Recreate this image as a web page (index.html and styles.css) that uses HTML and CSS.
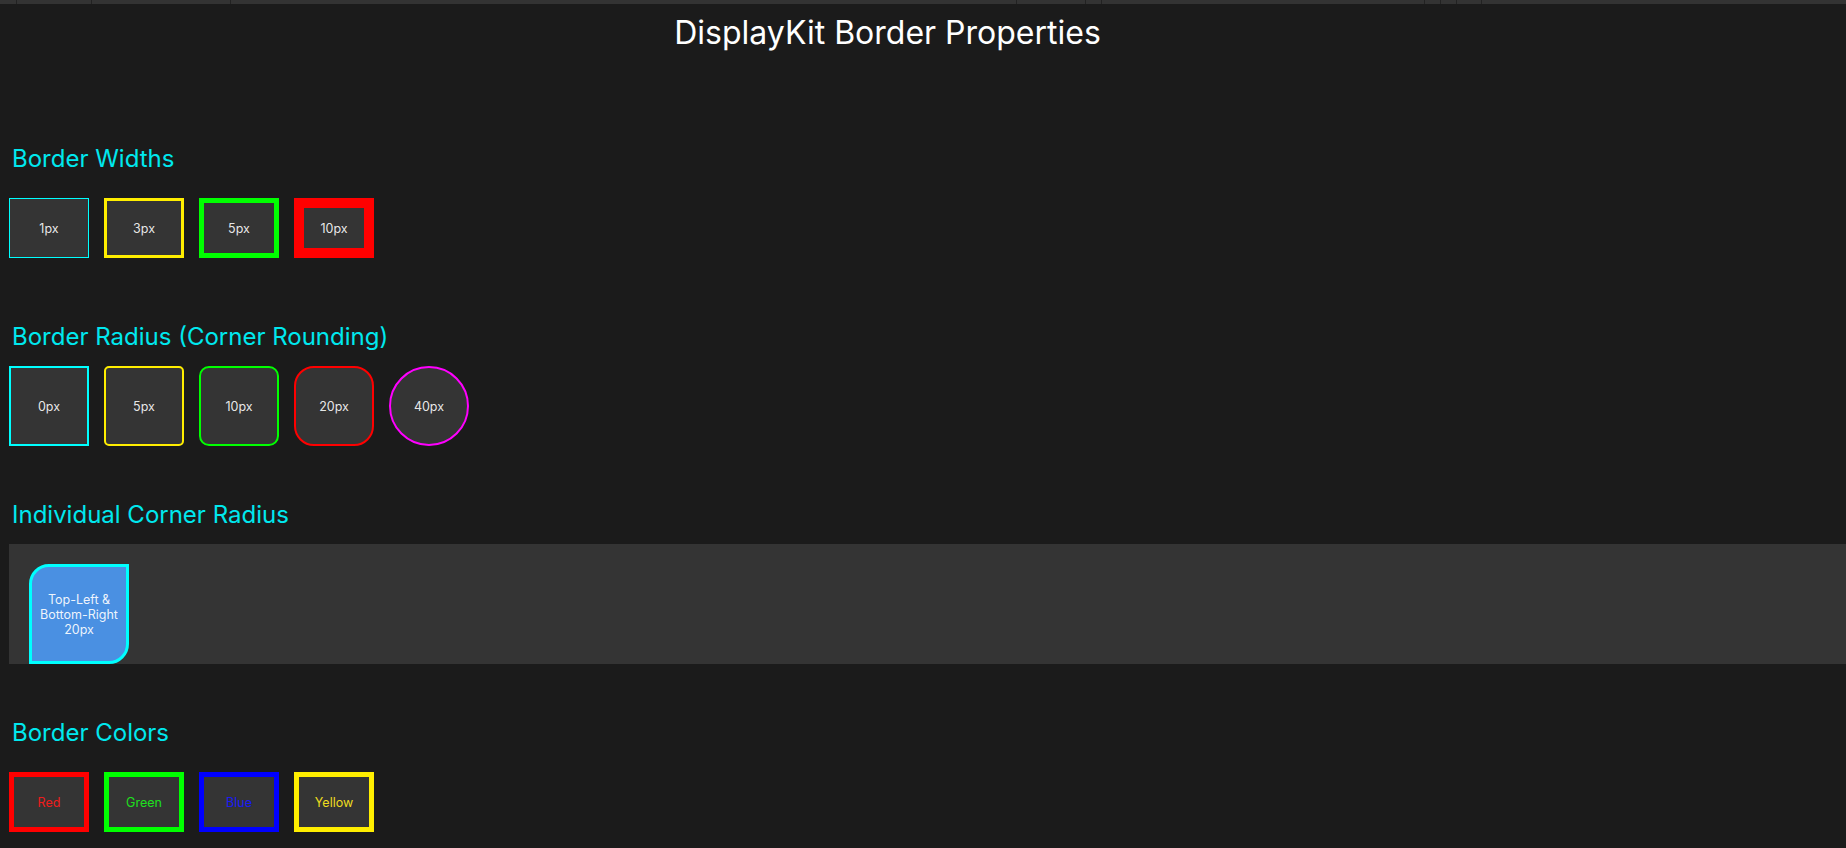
FILE: index.html
```html
<!DOCTYPE html>
<html lang="en">
<head>
<meta charset="utf-8">
<title>DisplayKit Border Properties</title>
<link rel="stylesheet" href="styles.css">
</head>
<body>
<div class="toolbar">
  <span class="seg" style="width:17px"></span>
  <span class="seg" style="width:75px"></span>
  <span class="seg" style="width:139px"></span>
  <span class="seg" style="width:786px"></span>
  <span class="seg" style="width:69px"></span>
  <span class="seg" style="width:16px"></span>
  <span class="seg" style="width:323px"></span>
  <span class="seg" style="width:16px"></span>
  <span class="seg" style="width:16px"></span>
  <span class="seg" style="width:25px"></span>
  <span class="seg fill"></span>
</div>

<h1 class="title">DisplayKit Border Properties</h1>

<main class="content">
  <section class="section first">
    <h2 class="heading">Border Widths</h2>
    <div class="row">
      <div class="box wide bw1 c-cyan">1px</div>
      <div class="box wide bw3 c-yellow">3px</div>
      <div class="box wide bw5 c-green">5px</div>
      <div class="box wide bw10 c-red">10px</div>
    </div>
  </section>

  <section class="section">
    <h2 class="heading">Border Radius (Corner Rounding)</h2>
    <div class="row">
      <div class="box square bw2 c-cyan r0">0px</div>
      <div class="box square bw2 c-yellow r5">5px</div>
      <div class="box square bw2 c-green r10">10px</div>
      <div class="box square bw2 c-red r20">20px</div>
      <div class="box square bw2 c-magenta r40">40px</div>
    </div>
  </section>

  <section class="section">
    <h2 class="heading">Individual Corner Radius</h2>
    <div class="panel">
      <div class="corner-box">Top-Left &amp;<br>Bottom-Right<br>20px</div>
    </div>
  </section>

  <section class="section">
    <h2 class="heading">Border Colors</h2>
    <div class="row">
      <div class="box wide bw5 c-red t-red">Red</div>
      <div class="box wide bw5 c-green t-green">Green</div>
      <div class="box wide bw5 c-blue t-blue">Blue</div>
      <div class="box wide bw5 c-yellow t-yellow">Yellow</div>
    </div>
  </section>
</main>
</body>
</html>
```

FILE: styles.css
```css
* {
  box-sizing: border-box;
}

html, body {
  margin: 0;
  padding: 0;
}

body {
  background: #1b1b1b;
  font-family: Inter, "Noto Sans", "Liberation Sans", sans-serif;
  color: #ffffff;
  overflow: hidden;
  width: 1846px;
  height: 848px;
}

.toolbar {
  display: flex;
  height: 4px;
  background: #333333;
}

.toolbar .seg {
  height: 4px;
  border-right: 1px solid #222222;
  flex: none;
}

.toolbar .seg.fill {
  flex: 1;
  border-right: none;
}

.title {
  margin: 9px 0 0 0;
  padding-right: 71px;
  font-size: 32px;
  font-weight: 400;
  line-height: normal;
  text-align: center;
  color: #ffffff;
}

.content {
  padding-left: 9px;
}

.section {
  margin-top: 54px;
}

.section.first {
  margin-top: 92px;
}

.heading {
  margin: 0 0 15px 0;
  padding-left: 3px;
  font-size: 24px;
  font-weight: 400;
  line-height: normal;
  color: #00e8ee;
}

.row {
  display: flex;
  gap: 15px;
  height: 80px;
  align-items: center;
}

.box {
  flex: none;
  display: flex;
  align-items: center;
  justify-content: center;
  background: #343434;
  border-style: solid;
  font-size: 12.5px;
  color: rgba(255, 255, 255, 0.9);
}

.box.wide {
  width: 80px;
  height: 60px;
}

.box.square {
  width: 80px;
  height: 80px;
}

.bw1 { border-width: 1px; }
.bw2 { border-width: 2px; }
.bw3 { border-width: 3px; }
.bw5 { border-width: 5px; }
.bw10 { border-width: 10px; }

.c-cyan { border-color: #00ffff; }
.c-yellow { border-color: #ffee00; }
.c-green { border-color: #00ff00; }
.c-red { border-color: #ff0000; }
.c-blue { border-color: #0000ff; }
.c-magenta { border-color: #ff00ff; }

.r0 { border-radius: 0; }
.r5 { border-radius: 5px; }
.r10 { border-radius: 10px; }
.r20 { border-radius: 20px; }
.r40 { border-radius: 40px; }

.t-red { color: #ee1c1c; }
.t-green { color: #1ee01e; }
.t-blue { color: #1a1af4; }
.t-yellow { color: #eedc1e; }

.panel {
  width: 1900px;
  height: 120px;
  background: #343434;
  padding: 20px 0 0 20px;
  overflow: hidden;
}

.corner-box {
  width: 100px;
  height: 100px;
  display: flex;
  align-items: center;
  justify-content: center;
  text-align: center;
  background: #4a90e2;
  border: 3px solid #00ffff;
  border-radius: 20px 0 20px 0;
  font-size: 12.5px;
  line-height: 1.2;
  color: rgba(255, 255, 255, 0.92);
}
```
